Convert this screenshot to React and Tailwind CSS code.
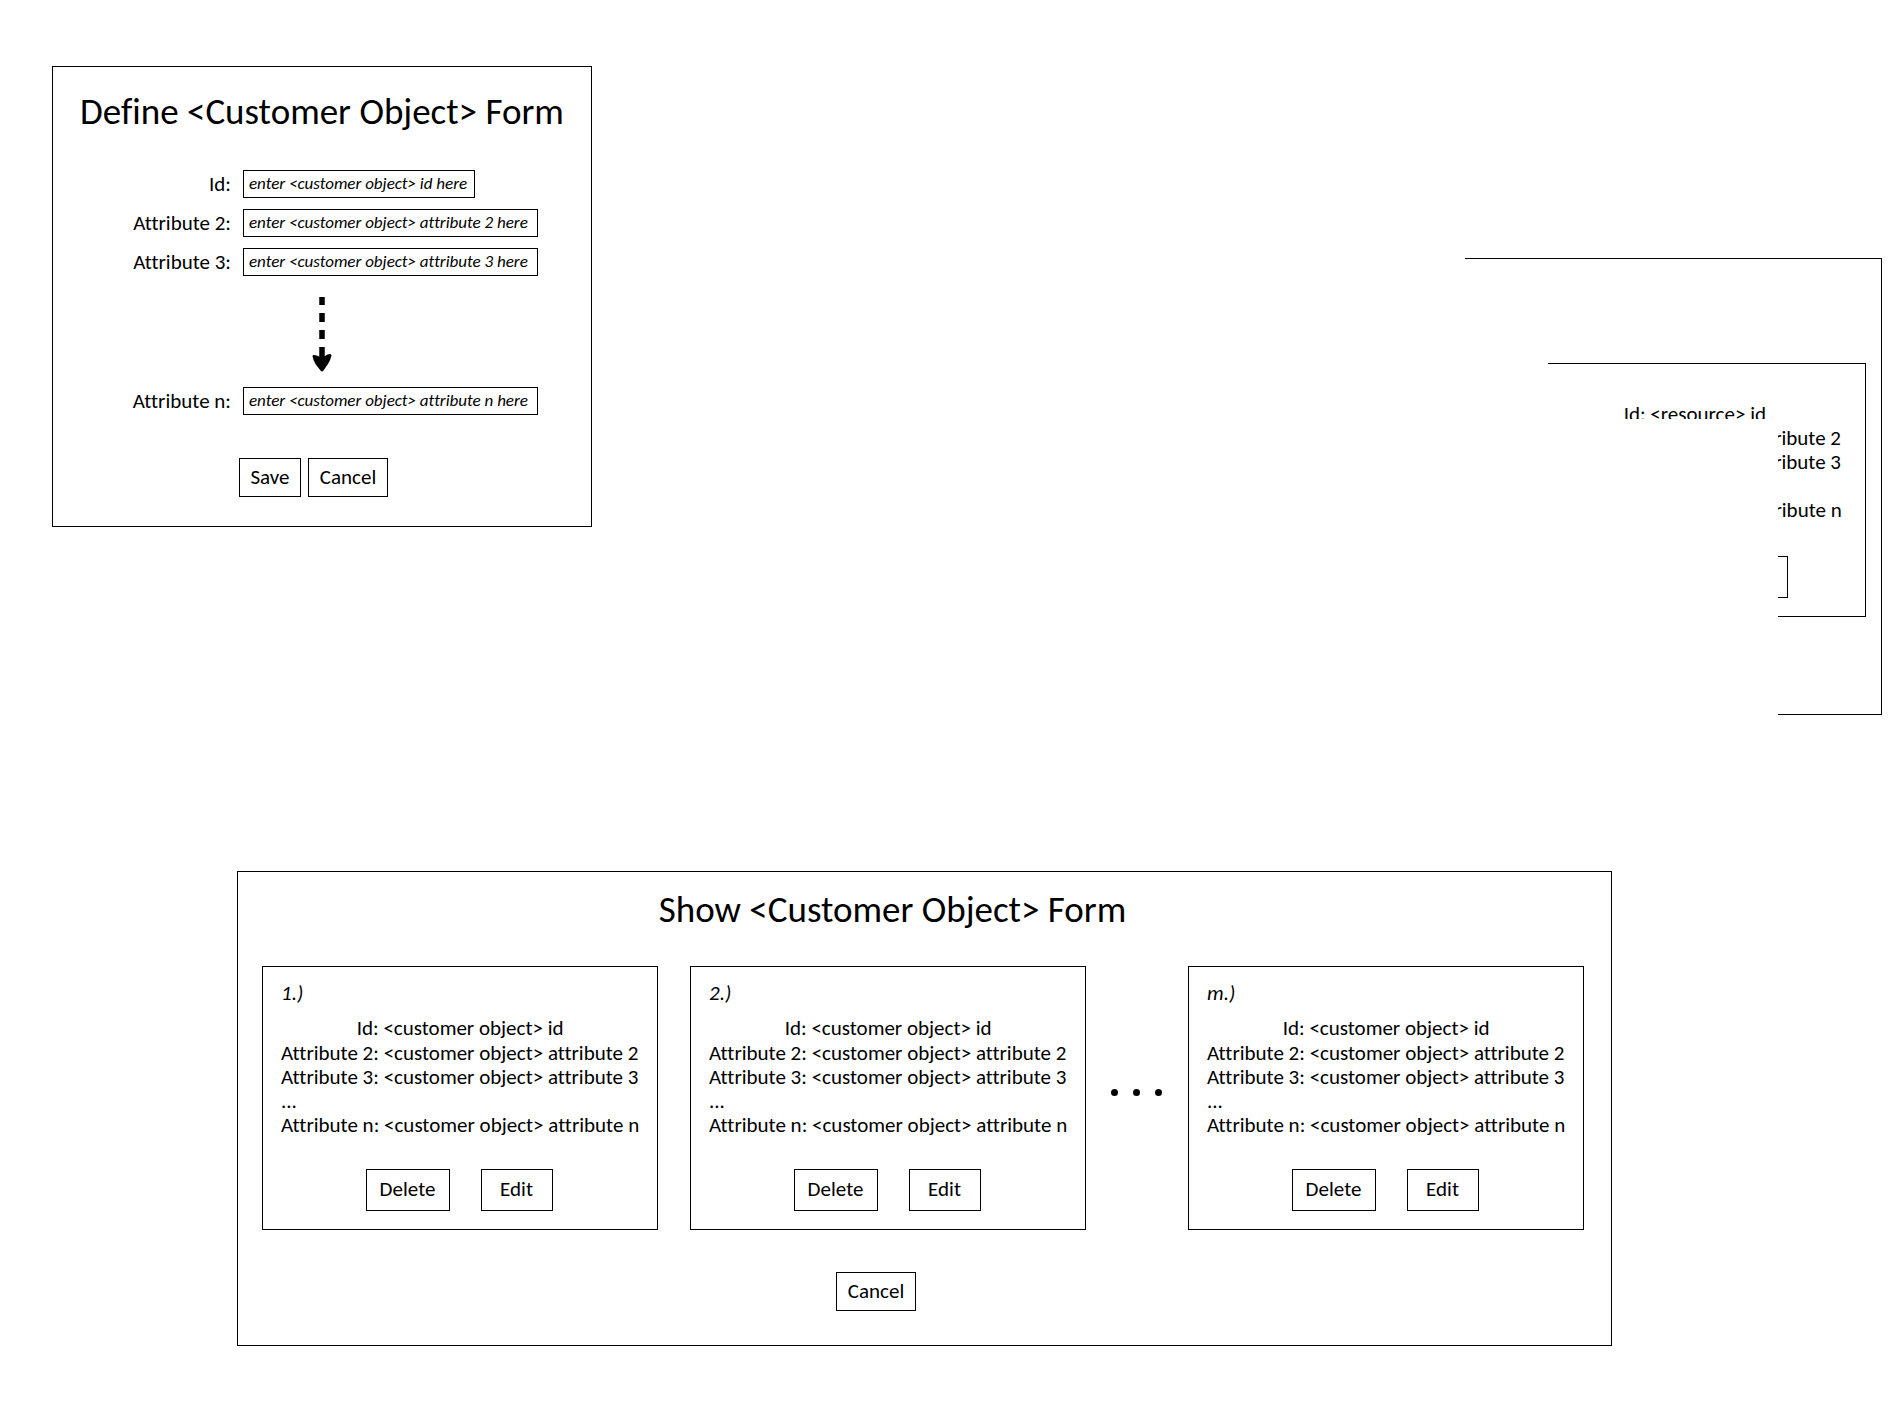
const attributes = ["2", "3", "n"];

function Button({ className, children }) {
  return (
    <button type="button" className={`border border-black bg-white pb-0.5 leading-6 ${className}`}>
      {children}
    </button>
  );
}

function Field({ id, label, placeholder, width }) {
  return (
    <div className="flex items-center gap-3">
      <label htmlFor={id} className="w-[178px] text-right leading-6">
        {label}
      </label>
      <input
        id={id}
        type="text"
        placeholder={placeholder}
        className={`h-7 border border-black bg-white px-[5px] pb-0.5 text-[17px] italic placeholder:text-black placeholder:opacity-100 ${width}`}
      />
    </div>
  );
}

function DashedArrow() {
  return (
    <svg width="20" height="76" viewBox="0 0 20 76" aria-hidden="true" className="mt-5 ml-[259px]">
      <path d="M10 1v8M10 17v9M10 34v9M10 51v12" stroke="#000" strokeWidth="5.5" fill="none" />
      <path d="M0.500 60Q0.500 59 2 59Q5 59 7 60.500Q10 61.500 13 60Q15.500 58 18 58Q19.500 58 19.500 59.500Q18.500 64 16 68Q13.500 71.500 11.500 74.500Q10 76.500 8.500 74.500Q6 71.500 3.500 68Q1 64 0.500 60Z" />
    </svg>
  );
}

function DefineForm() {
  return (
    <form className="mt-[66px] w-[540px] border border-black pb-[29px]">
      <h1 className="mt-[25px] text-center text-[37px] leading-10">Define &lt;Customer Object&gt; Form</h1>
      <div className="mt-[38px] flex flex-col gap-[11px]">
        <Field id="object-id" label="Id:" placeholder="enter <customer object> id here" width="w-[232px]" />
        <Field id="attribute-2" label="Attribute 2:" placeholder="enter <customer object> attribute 2 here" width="w-[295px]" />
        <Field id="attribute-3" label="Attribute 3:" placeholder="enter <customer object> attribute 3 here" width="w-[295px]" />
      </div>
      <DashedArrow />
      <div className="mt-[15px]">
        <Field id="attribute-n" label="Attribute n:" placeholder="enter <customer object> attribute n here" width="w-[295px]" />
      </div>
      <div className="mt-[43px] ml-[186px] flex gap-[7px]">
        <Button className="h-[39px] w-[62px]">Save</Button>
        <Button className="h-[39px] w-[80px]">Cancel</Button>
      </div>
    </form>
  );
}

function ResourcePanel() {
  return (
    <section className="relative mt-[258px] w-[417px] border-y border-r border-black pr-[15px] pb-[97px]">
      <div className="mt-[104px] ml-[83px] border-y border-r border-black pr-6 pb-[18px] text-right leading-6 whitespace-nowrap">
        <p className="mt-[38px] pr-[75px]">Id: &lt;resource&gt; id</p>
        <p>Attribute 2: &lt;resource&gt; attribute 2</p>
        <p>Attribute 3: &lt;resource&gt; attribute 3</p>
        <p className="text-left">...</p>
        <p>Attribute n: &lt;resource&gt; attribute n</p>
        <div className="mt-[34px] flex justify-end pr-[53px]">
          <Button className="h-[42px] w-[72px]">Edit</Button>
        </div>
      </div>
      <div className="absolute top-[160px] right-[103px] -bottom-px left-0 bg-white" />
    </section>
  );
}

function ObjectCard({ index }) {
  return (
    <article className="flex-1 border border-black pt-3.5 pb-[18px] pl-[18px] leading-6">
      <p className="italic">{index}.)</p>
      <div className="mt-[11px] w-fit whitespace-nowrap">
        <p className="mb-px text-center">Id: &lt;customer object&gt; id</p>
        {attributes.map((name) => (
          <div key={name}>
            {name === "n" && <p>...</p>}
            <p>
              Attribute {name}: &lt;customer object&gt; attribute {name}
            </p>
          </div>
        ))}
      </div>
      <div className="mt-8 flex justify-center gap-[31px] pr-5">
        <Button className="h-[42px] w-[84px]">Delete</Button>
        <Button className="h-[42px] w-[72px]">Edit</Button>
      </div>
    </article>
  );
}

function ShowForm() {
  return (
    <section className="mt-[156px] mr-[291px] ml-[237px] border border-black pr-[27px] pb-[34px] pl-6">
      <h2 className="mt-[18px] pr-[61px] text-center text-[37px] leading-10">Show &lt;Customer Object&gt; Form</h2>
      <div className="mt-[36px] flex">
        <ObjectCard index="1" />
        <div className="w-8" />
        <ObjectCard index="2" />
        <div className="flex w-[102px] items-center justify-center gap-[15px] pr-0.5 pb-3">
          <span className="size-[7px] rounded-full bg-black" />
          <span className="size-[7px] rounded-full bg-black" />
          <span className="size-[7px] rounded-full bg-black" />
        </div>
        <ObjectCard index="m" />
      </div>
      <div className="mt-[42px] flex justify-center pr-[94px]">
        <Button className="h-[39px] w-[80px]">Cancel</Button>
      </div>
    </section>
  );
}

export default function App() {
  return (
    <main className="min-h-screen bg-white pb-[72px] font-[Calibri,Carlito,Lato,sans-serif] text-[21px] text-black [font-variant-ligatures:none]">
      <div className="flex items-start justify-between pr-[21px] pl-[52px]">
        <DefineForm />
        <ResourcePanel />
      </div>
      <ShowForm />
    </main>
  );
}
